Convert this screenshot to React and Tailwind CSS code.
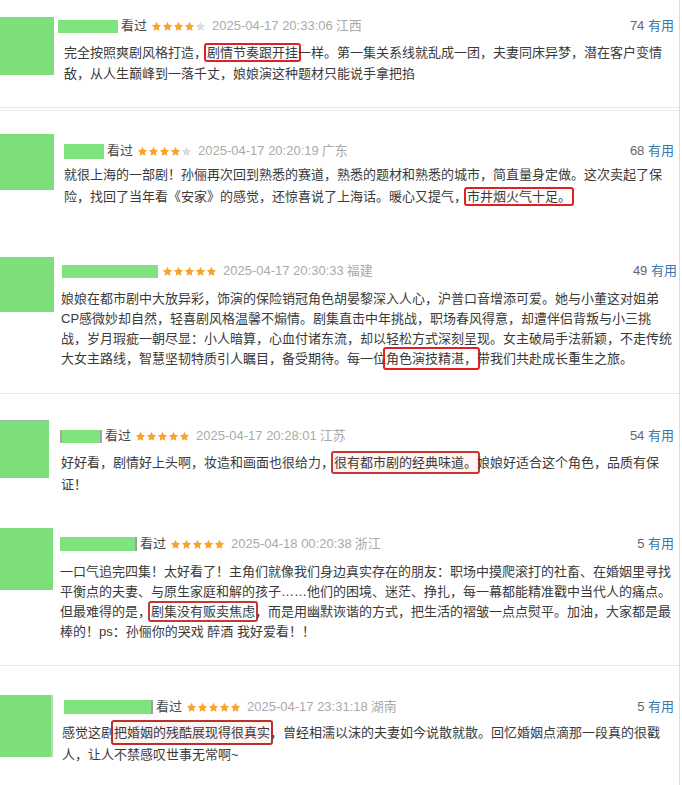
import React from 'react';

// 评论截图拼接：每块的尺寸都按原图量出来
const reviews = [
  {
    cls: 'h-[108px] border-b border-[#e6e6e6]',
    avatar: 'mt-[17px] w-[54px] h-[58px]',
    head: 'mt-[18px] pr-[5px]',
    name: 'ml-[4px] w-[60px] h-[13px]',
    seen: true,
    stars: 4,
    date: '2025-04-17 20:33:06',
    loc: '江西',
    count: 74,
    body: 'mt-[8px] ml-[10px] leading-[21px]',
    box: 'border-[#e3201f] py-0',
    lines: [
      ['完全按照爽剧风格打造，', { b: '剧情节奏跟开挂' }, '一样。第一集关系线就乱成一团，夫妻同床异梦，潜在客户变情'],
      ['敌，从人生巅峰到一落千丈，娘娘演这种题材只能说手拿把掐'],
    ],
  },
  {
    cls: 'mt-[2px] h-[138px] border-t border-[#eeeeee]',
    avatar: 'mt-[23px] w-[54px] h-[56px]',
    head: 'mt-[32px] pr-[5px]',
    name: 'ml-[10px] w-[40px] h-[15px]',
    seen: true,
    stars: 4,
    date: '2025-04-17 20:20:19',
    loc: '广东',
    count: 68,
    body: 'mt-[5px] ml-[10px] leading-[22px]',
    box: 'border-[#e3201f] py-0',
    lines: [
      ['就很上海的一部剧！孙俪再次回到熟悉的赛道，熟悉的题材和熟悉的城市，简直量身定做。这次卖起了保'],
      ['险，找回了当年看《安家》的感觉，还惊喜说了上海话。暖心又提气，', { b: '市井烟火气十足。' }],
    ],
  },
  {
    cls: 'h-[146px] border-b border-[#e6e6e6]',
    avatar: 'mt-[9px] w-[54px] h-[55px]',
    head: 'mt-[15px] pr-[2px]',
    name: 'ml-[8px] w-[96px] h-[13px]',
    seen: false,
    stars: 5,
    date: '2025-04-17 20:30:33',
    loc: '福建',
    count: 49,
    body: 'mt-[10px] ml-[7px] leading-[20px]',
    box: 'border-[#e3201f] py-[2px]',
    lines: [
      ['娘娘在都市剧中大放异彩，饰演的保险销冠角色胡晏黎深入人心，沪普口音增添可爱。她与小董这对姐弟'],
      ['CP感微妙却自然，轻喜剧风格温馨不煽情。剧集直击中年挑战，职场春风得意，却遭伴侣背叛与小三挑'],
      ['战，岁月瑕疵一朝尽显：小人暗算，心血付诸东流，却以轻松方式深刻呈现。女主破局手法新颖，不走传统'],
      ['大女主路线，智慧坚韧特质引人瞩目，备受期待。每一位', { b: '角色演技精湛，' }, '带我们共赴成长重生之旅。'],
    ],
  },
  {
    cls: 'h-[120px]',
    avatar: 'mt-[26px] w-[49px] h-[58px] border-t border-[#9bbf99]',
    head: 'mt-[34px] pr-[5px]',
    name: 'ml-[11px] w-[42px] h-[13px] border-x-2 border-[#a0a8a0]',
    seen: true,
    stars: 5,
    date: '2025-04-17 20:28:01',
    loc: '江苏',
    count: 54,
    body: 'mt-[8px] ml-[12px] leading-[22px]',
    box: 'border-[#c33a33] bg-[#fff4f3] py-[2px]',
    lines: [
      ['好好看，剧情好上头啊，妆造和画面也很给力，', { b: '很有都市剧的经典味道。' }, '娘娘好适合这个角色，品质有保'],
      ['证！'],
    ],
  },
  {
    cls: 'h-[152px] border-b border-[#e6e6e6]',
    avatar: 'mt-[14px] w-[53px] h-[62px]',
    head: 'mt-[22px] pr-[5px]',
    name: 'ml-[7px] w-[77px] h-[14px] border-r-2 border-[#9aa39a]',
    seen: true,
    stars: 5,
    date: '2025-04-18 00:20:38',
    loc: '浙江',
    count: 5,
    body: 'mt-[10px] ml-[7px] leading-[20px]',
    box: 'border-[#c33a33] py-[1px]',
    lines: [
      ['一口气追完四集！太好看了！主角们就像我们身边真实存在的朋友：职场中摸爬滚打的社畜、在婚姻里寻找'],
      ['平衡点的夫妻、与原生家庭和解的孩子……他们的困境、迷茫、挣扎，每一幕都能精准戳中当代人的痛点。'],
      ['但最难得的是，', { b: '剧集没有贩卖焦虑' }, '，而是用幽默诙谐的方式，把生活的褶皱一点点熨平。加油，大家都是最'],
      ['棒的！ps：孙俪你的哭戏 醉酒 我好爱看！！'],
    ],
  },
  {
    cls: 'flex-1',
    avatar: 'mt-[29px] w-[53px] h-[62px] border-r-2 border-[#b5d9b3]',
    head: 'mt-[33px] pr-[5px]',
    name: 'ml-[11px] w-[89px] h-[14px] border-r-2 border-[#9aa39a]',
    seen: true,
    stars: 5,
    date: '2025-04-17 23:31:18',
    loc: '湖南',
    count: 5,
    body: 'mt-[7px] ml-[9px] leading-[22px]',
    box: 'border-[#b8322c] bg-[#fff3f2] py-[3px]',
    lines: [
      ['感觉这剧', { b: '把婚姻的残酷展现得很真实' }, '，曾经相濡以沫的夫妻如今说散就散。回忆婚姻点滴那一段真的很戳'],
      ['人，让人不禁感叹世事无常啊~'],
    ],
  },
];

function Stars({ n, className }) {
  return (
    <span className={`flex ${className}`}>
      {[0, 1, 2, 3, 4].map(i => (
        <svg key={i} width="11" height="11" viewBox="0 0 24 24">
          <path
            d="M12 1.8l3.1 6.5 7 1-5.1 4.9 1.3 7L12 17.9l-6.3 3.3 1.3-7-5.1-4.9 7-1z"
            fill={i < n ? '#f7a42b' : '#dcdcdc'}
          />
        </svg>
      ))}
    </span>
  );
}

function Review({ r }) {
  return (
    <div className={`flex shrink-0 ${r.cls}`}>
      <div className={`shrink-0 bg-[#7ddf7b] ${r.avatar}`} />
      <div className="flex-1 min-w-0">
        <div className={`flex items-center h-[16px] text-[13px] ${r.head}`}>
          <div className={`shrink-0 bg-[#7fe47f] ${r.name}`} />
          {r.seen && <span className="ml-[3px] text-[#494949]">看过</span>}
          <Stars n={r.stars} className="ml-[4px]" />
          <span className="ml-[6px] text-[#aaaaaa]">{r.date}</span>
          <span className="ml-[3px] text-[#aaaaaa]">{r.loc}</span>
          <span className="ml-auto text-[#666666]">
            {r.count} <span className="text-[#3b76ae]">有用</span>
          </span>
        </div>
        <div className={`text-[13px] text-[#3a3a3a] ${r.body}`}>
          {r.lines.map((line, i) => (
            <div key={i} className="whitespace-nowrap">
              {line.map((p, j) =>
                typeof p === 'string' ? (
                  <span key={j}>{p}</span>
                ) : (
                  <span key={j} className={`border-2 rounded-[3px] -mx-[3px] px-[1px] ${r.box}`}>
                    {p.b}
                  </span>
                )
              )}
            </div>
          ))}
        </div>
      </div>
    </div>
  );
}

export default function App() {
  return (
    <div className="w-[682px] h-[785px] bg-white overflow-hidden flex font-['Liberation_Sans','Noto_Sans_CJK_SC',sans-serif]">
      <div className="w-[680px] h-full flex flex-col border-r border-[#dddddd]">
        {reviews.map((r, i) => (
          <Review key={i} r={r} />
        ))}
      </div>
    </div>
  );
}
